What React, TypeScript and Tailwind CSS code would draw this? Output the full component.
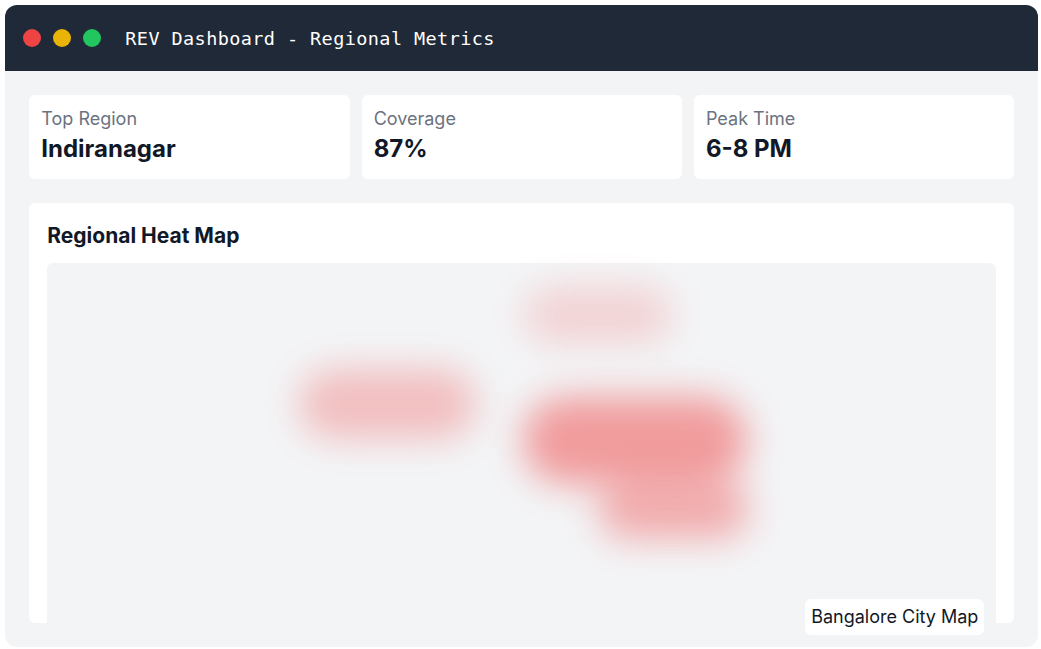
const stats = [
  { label: "Top Region", value: "Indiranagar" },
  { label: "Coverage", value: "87%" },
  { label: "Peak Time", value: "6-8 PM" },
];

const zones = [
  "left-[476px] top-[134px] h-[87px] w-[224px] opacity-50",
  "left-[252px] top-[106px] h-[70px] w-[177px] opacity-30",
  "left-[551px] top-[217px] h-[59px] w-[151px] opacity-40",
  "left-[477px] top-[24px] h-[56px] w-[148px] opacity-[0.19]",
];

function TitleBar() {
  return (
    <header className="flex h-[66px] shrink-0 items-center gap-3 bg-[#1f2937] px-[18px]">
      <span className="size-[18px] rounded-full bg-[#ef4444]" />
      <span className="size-[18px] rounded-full bg-[#eab308]" />
      <span className="size-[18px] rounded-full bg-[#22c55e]" />
      <h1 className="ml-3 whitespace-pre pt-0.5 font-['DejaVu_Sans_Mono',monospace] text-[18.5px] leading-7 tracking-[0.41px] text-white">
        REV Dashboard - Regional Metrics
      </h1>
    </header>
  );
}

function StatCard({ label, value }: { label: string; value: string }) {
  return (
    <div className="h-[84px] rounded-md bg-white px-3 pt-3">
      <p className="text-[18px] leading-6 text-[#6b7280]">{label}</p>
      <p className="text-[24px] leading-9 font-bold">{value}</p>
    </div>
  );
}

export default function App() {
  return (
    <div className="h-[649px] w-[1041px] overflow-hidden bg-white pt-[5px] pl-[5.3px] font-['Inter',sans-serif] text-[#111827]">
      <div className="flex h-[642px] w-[1033px] flex-col overflow-hidden rounded-xl bg-[#f3f4f6]">
        <TitleBar />
        <main className="flex flex-1 flex-col gap-6 p-6">
          <div className="grid grid-cols-3 gap-3">
            {stats.map((s) => (
              <StatCard key={s.label} {...s} />
            ))}
          </div>
          <section className="h-[420px] rounded-md bg-white px-[18px] pt-[18px]">
            <h2 className="mb-3 text-[21px] leading-[30px] font-bold">Regional Heat Map</h2>
            <div className="relative h-[384px] rounded-md bg-[#f3f4f6]">
              {zones.map((zone) => (
                <div key={zone} className={`absolute rounded-full bg-[#ef4444] blur-[18px] ${zone}`} />
              ))}
              <div className="absolute right-3 bottom-3 rounded-md bg-white px-1.5 py-1.5 text-[18px] leading-6">
                Bangalore City Map
              </div>
            </div>
          </section>
        </main>
      </div>
    </div>
  );
}
